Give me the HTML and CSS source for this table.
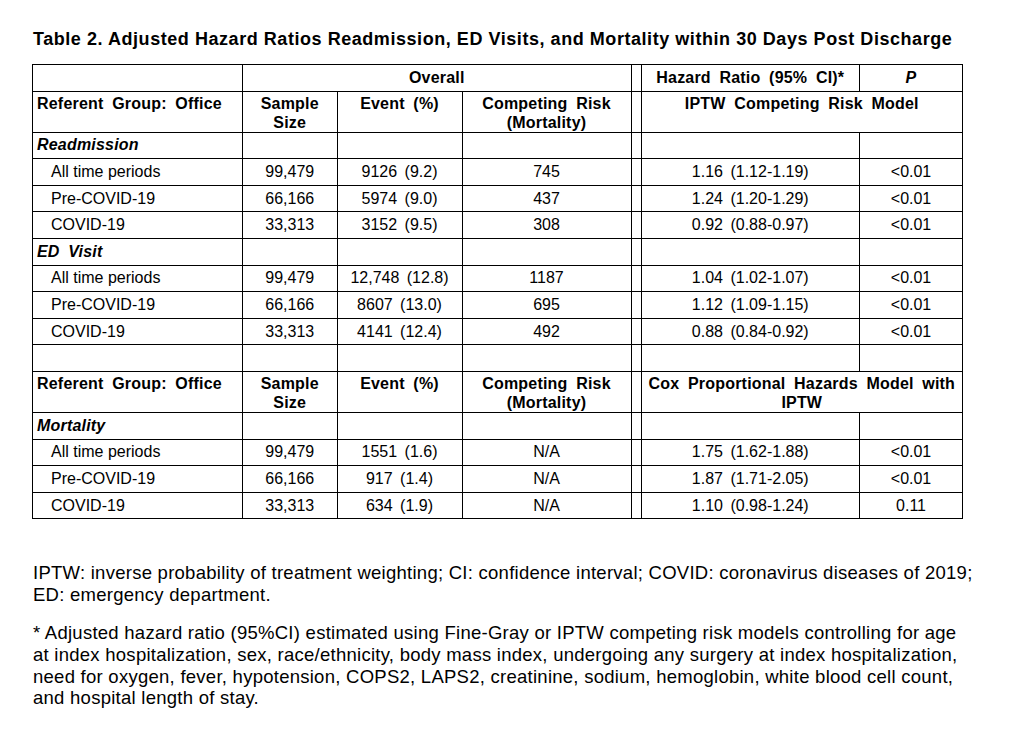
FILE: index.html
```html
<!DOCTYPE html>
<html lang="en">
<head>
<meta charset="utf-8">
<title>Table 2</title>
<link rel="stylesheet" href="styles.css">
</head>
<body>
<div class="page">
  <h1 class="title">Table 2. Adjusted Hazard Ratios Readmission, ED Visits, and Mortality within 30 Days Post Discharge</h1>
  <table class="hr-table">
    <colgroup>
      <col class="c-label">
      <col class="c-size">
      <col class="c-event">
      <col class="c-risk">
      <col class="c-gap">
      <col class="c-hr">
      <col class="c-p">
    </colgroup>
    <tbody>
      <tr class="row">
        <td></td>
        <td colspan="3" class="head center">Overall</td>
        <td class="gap"></td>
        <td class="head center">Hazard Ratio (95% CI)*</td>
        <td class="head center italic">P</td>
      </tr>
      <tr class="row-dbl">
        <td class="head top">Referent Group: Office</td>
        <td class="head top center">Sample<br>Size</td>
        <td class="head top center">Event (%)</td>
        <td class="head top center">Competing Risk<br>(Mortality)</td>
        <td class="gap"></td>
        <td colspan="2" class="head top center">IPTW Competing Risk Model</td>
      </tr>
      <tr class="row">
        <td class="head italic">Readmission</td>
        <td></td><td></td><td></td><td class="gap"></td><td></td><td></td>
      </tr>
      <tr class="row">
        <td class="sub">All time periods</td>
        <td class="num">99,479</td>
        <td class="num">9126 (9.2)</td>
        <td class="num">745</td>
        <td class="gap"></td>
        <td class="num">1.16 (1.12-1.19)</td>
        <td class="num">&lt;0.01</td>
      </tr>
      <tr class="row">
        <td class="sub">Pre-COVID-19</td>
        <td class="num">66,166</td>
        <td class="num">5974 (9.0)</td>
        <td class="num">437</td>
        <td class="gap"></td>
        <td class="num">1.24 (1.20-1.29)</td>
        <td class="num">&lt;0.01</td>
      </tr>
      <tr class="row">
        <td class="sub">COVID-19</td>
        <td class="num">33,313</td>
        <td class="num">3152 (9.5)</td>
        <td class="num">308</td>
        <td class="gap"></td>
        <td class="num">0.92 (0.88-0.97)</td>
        <td class="num">&lt;0.01</td>
      </tr>
      <tr class="row">
        <td class="head italic">ED Visit</td>
        <td></td><td></td><td></td><td class="gap"></td><td></td><td></td>
      </tr>
      <tr class="row">
        <td class="sub">All time periods</td>
        <td class="num">99,479</td>
        <td class="num">12,748 (12.8)</td>
        <td class="num">1187</td>
        <td class="gap"></td>
        <td class="num">1.04 (1.02-1.07)</td>
        <td class="num">&lt;0.01</td>
      </tr>
      <tr class="row">
        <td class="sub">Pre-COVID-19</td>
        <td class="num">66,166</td>
        <td class="num">8607 (13.0)</td>
        <td class="num">695</td>
        <td class="gap"></td>
        <td class="num">1.12 (1.09-1.15)</td>
        <td class="num">&lt;0.01</td>
      </tr>
      <tr class="row">
        <td class="sub">COVID-19</td>
        <td class="num">33,313</td>
        <td class="num">4141 (12.4)</td>
        <td class="num">492</td>
        <td class="gap"></td>
        <td class="num">0.88 (0.84-0.92)</td>
        <td class="num">&lt;0.01</td>
      </tr>
      <tr class="row">
        <td></td><td></td><td></td><td></td><td class="gap"></td><td></td><td></td>
      </tr>
      <tr class="row-dbl">
        <td class="head top">Referent Group: Office</td>
        <td class="head top center">Sample<br>Size</td>
        <td class="head top center">Event (%)</td>
        <td class="head top center">Competing Risk<br>(Mortality)</td>
        <td class="gap"></td>
        <td colspan="2" class="head top center">Cox Proportional Hazards Model with<br>IPTW</td>
      </tr>
      <tr class="row">
        <td class="head italic">Mortality</td>
        <td></td><td></td><td></td><td class="gap"></td><td></td><td></td>
      </tr>
      <tr class="row">
        <td class="sub">All time periods</td>
        <td class="num">99,479</td>
        <td class="num">1551 (1.6)</td>
        <td class="num">N/A</td>
        <td class="gap"></td>
        <td class="num">1.75 (1.62-1.88)</td>
        <td class="num">&lt;0.01</td>
      </tr>
      <tr class="row">
        <td class="sub">Pre-COVID-19</td>
        <td class="num">66,166</td>
        <td class="num">917 (1.4)</td>
        <td class="num">N/A</td>
        <td class="gap"></td>
        <td class="num">1.87 (1.71-2.05)</td>
        <td class="num">&lt;0.01</td>
      </tr>
      <tr class="row">
        <td class="sub">COVID-19</td>
        <td class="num">33,313</td>
        <td class="num">634 (1.9)</td>
        <td class="num">N/A</td>
        <td class="gap"></td>
        <td class="num">1.10 (0.98-1.24)</td>
        <td class="num">0.11</td>
      </tr>
    </tbody>
  </table>
  <div class="notes">
    <p>IPTW: inverse probability of treatment weighting; CI: confidence interval; COVID: coronavirus diseases of 2019;<br>ED: emergency department.</p>
    <p>* Adjusted hazard ratio (95%CI) estimated using Fine-Gray or IPTW competing risk models controlling for age<br>at index hospitalization, sex, race/ethnicity, body mass index, undergoing any surgery at index hospitalization,<br>need for oxygen, fever, hypotension, COPS2, LAPS2, creatinine, sodium, hemoglobin, white blood cell count,<br>and hospital length of stay.</p>
  </div>
</div>
</body>
</html>
```

FILE: styles.css
```css
html, body {
  margin: 0;
  padding: 0;
  background: #ffffff;
}

body {
  font-family: "Liberation Sans", Arial, sans-serif;
  color: #000000;
}

.page {
  padding: 29px 0 0 32px;
}

.title {
  margin: 0 0 15px 1px;
  font-size: 18px;
  line-height: 20px;
  font-weight: bold;
  letter-spacing: 0.55px;
  white-space: nowrap;
}

.hr-table {
  border-collapse: collapse;
  table-layout: fixed;
  width: 930px;
  font-size: 16px;
  line-height: 16px;
}

.c-label { width: 210px; }
.c-size { width: 94.5px; }
.c-event { width: 125px; }
.c-risk { width: 169px; }
.c-gap { width: 10px; }
.c-hr { width: 218.5px; }
.c-p { width: 103px; }

.hr-table td {
  border: 1px solid #000000;
  padding: 0 4px;
  vertical-align: middle;
  white-space: nowrap;
  overflow: hidden;
}

.row { height: 26.6px; }
.row-dbl { height: 41px; }

.hr-table td.gap { padding: 0; }

.head {
  font-weight: bold;
  word-spacing: 4px;
  letter-spacing: 0.2px;
}

.hr-table .row-dbl .top {
  vertical-align: top;
  line-height: 19px;
  padding-top: 2px;
  padding-bottom: 0;
}

.center { text-align: center; }
.italic { font-style: italic; }

.hr-table td.sub {
  padding-left: 18px;
}

.num {
  text-align: center;
  word-spacing: 3px;
}

.notes {
  margin-top: 43px;
  font-size: 18.5px;
  line-height: 21.8px;
  letter-spacing: 0.26px;
}

.notes p {
  margin: 0 0 16px 1px;
  white-space: nowrap;
}
```
